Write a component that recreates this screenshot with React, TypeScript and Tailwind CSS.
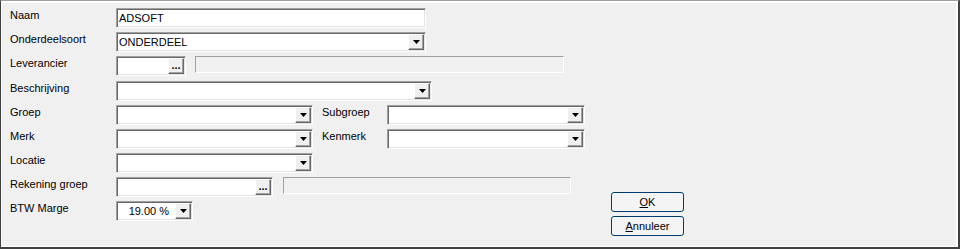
import React from 'react'

const font = { fontFamily: '"Liberation Sans", Arial, sans-serif' }

function Arrow() {
  return (
    <div className="flex h-full w-[16px] shrink-0 items-center justify-center border border-t-white border-l-white border-b-[#696969] border-r-[#696969] bg-[#f0f0f0] shadow-[inset_-1px_-1px_0_#a0a0a0]">
      <svg width="7" height="4" viewBox="0 0 7 4">
        <path d="M0 0h7L3.5 4z" fill="#000" />
      </svg>
    </div>
  )
}

function Dots() {
  return (
    <div className="flex h-full w-[16px] shrink-0 items-center justify-center border border-t-white border-l-white border-b-[#696969] border-r-[#696969] bg-[#f0f0f0] shadow-[inset_-1px_-1px_0_#a0a0a0]">
      <span className="text-[11px] font-bold leading-none text-black mt-[-2px]">...</span>
    </div>
  )
}

function Field({ w, value, right, combo, dots }: { w: string; value?: string; right?: boolean; combo?: boolean; dots?: boolean }) {
  return (
    <div className={`${w} flex h-[20px] shrink-0 border border-t-[#a0a0a0] border-l-[#a0a0a0] border-b-white border-r-white bg-white shadow-[inset_1px_1px_0_#696969,inset_-1px_-1px_0_#e3e3e3] p-[1px]`}>
      <div className={`flex flex-1 items-center px-[1px] text-[11px] text-black ${right ? 'justify-end pr-[6px]' : ''}`}>{value}</div>
      {combo && <Arrow />}
      {dots && <Dots />}
    </div>
  )
}

function Disabled({ w }: { w: string }) {
  return <div className={`${w} h-[17px] shrink-0 border border-t-[#a0a0a0] border-l-[#a0a0a0] border-b-white border-r-white bg-[#f0f0f0]`} />
}

function Label({ children, w = 'w-[106px]' }: { children: React.ReactNode; w?: string }) {
  return <div className={`${w} shrink-0 text-[11px] leading-[15px] text-black`}>{children}</div>
}

function Btn({ u, rest }: { u: string; rest: string }) {
  return (
    <button className="h-[20px] w-[73px] rounded-[3px] border border-[#003c74] bg-[#f4f4f4] text-[11px] text-black">
      <span className="underline">{u}</span>
      {rest}
    </button>
  )
}

export default function App() {
  return (
    <div style={font} className="h-[249px] w-[960px] overflow-hidden border-t border-l border-r-2 border-b-2 border-t-[#a0a0a0] border-l-[#404040] border-r-[#404040] border-b-[#404040] bg-[#f0f0f0]">
      <div className="flex h-full border-t-2 border-l border-r-2 border-b border-t-white border-l-[#f8f8f8] border-r-white border-b-white">
        <div className="flex w-[609px] shrink-0 flex-col pl-[8px] pt-[5px]">
          <div className="flex h-[24px]">
            <Label>Naam</Label>
            <Field w="w-[310px]" value="ADSOFT" />
          </div>
          <div className="flex h-[24px]">
            <Label>Onderdeelsoort</Label>
            <Field w="w-[310px]" value="ONDERDEEL" combo />
          </div>
          <div className="flex h-[25px]">
            <Label>Leverancier</Label>
            <Field w="w-[70px]" dots />
            <div className="ml-[9px]">
              <Disabled w="w-[369px]" />
            </div>
          </div>
          <div className="flex h-[24px]">
            <Label>Beschrijving</Label>
            <Field w="w-[316px]" combo />
          </div>
          <div className="flex h-[24px]">
            <Label>Groep</Label>
            <Field w="w-[197px]" combo />
            <div className="ml-[9px] flex">
              <Label w="w-[65px]">Subgroep</Label>
              <Field w="w-[198px]" combo />
            </div>
          </div>
          <div className="flex h-[24px]">
            <Label>Merk</Label>
            <Field w="w-[197px]" combo />
            <div className="ml-[9px] flex">
              <Label w="w-[65px]">Kenmerk</Label>
              <Field w="w-[198px]" combo />
            </div>
          </div>
          <div className="flex h-[24px]">
            <Label>Locatie</Label>
            <Field w="w-[197px]" combo />
          </div>
          <div className="flex h-[24px]">
            <Label>Rekening groep</Label>
            <Field w="w-[157px]" dots />
            <div className="ml-[10px]">
              <Disabled w="w-[288px]" />
            </div>
          </div>
          <div className="flex h-[24px]">
            <Label>BTW Marge</Label>
            <Field w="w-[77px]" value="19.00 %" right combo />
          </div>
        </div>
        <div className="mb-[10px] flex flex-col justify-end gap-[4px]">
          <Btn u="O" rest="K" />
          <Btn u="A" rest="nnuleer" />
        </div>
      </div>
    </div>
  )
}
